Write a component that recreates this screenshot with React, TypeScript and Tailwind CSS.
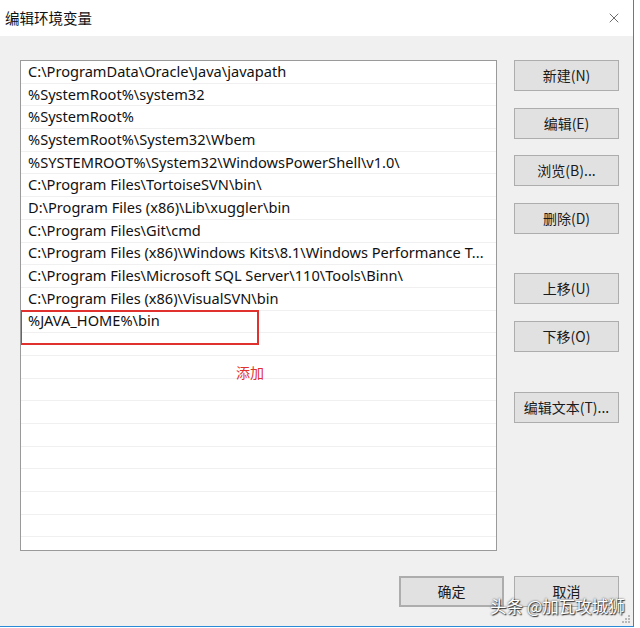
import { X } from "lucide-react";

const paths = [
  "C:\\ProgramData\\Oracle\\Java\\javapath",
  "%SystemRoot%\\system32",
  "%SystemRoot%",
  "%SystemRoot%\\System32\\Wbem",
  "%SYSTEMROOT%\\System32\\WindowsPowerShell\\v1.0\\",
  "C:\\Program Files\\TortoiseSVN\\bin\\",
  "D:\\Program Files (x86)\\Lib\\xuggler\\bin",
  "C:\\Program Files\\Git\\cmd",
  "C:\\Program Files (x86)\\Windows Kits\\8.1\\Windows Performance T...",
  "C:\\Program Files\\Microsoft SQL Server\\110\\Tools\\Binn\\",
  "C:\\Program Files (x86)\\VisualSVN\\bin",
  "%JAVA_HOME%\\bin",
];

const rows = [...paths, ...Array(10).fill("")];

function Btn({ label, className = "" }: { label: string; className?: string }) {
  return (
    <button
      className={
        "h-[31px] w-[105px] bg-[#e1e1e1] border border-[#adadad] text-[14px] text-[#1a1a1a] flex items-center justify-center " +
        className
      }
    >
      {label}
    </button>
  );
}

export default function App() {
  return (
    <div
      className="w-[640px] h-[628px] bg-white flex overflow-hidden"
      style={{ fontFamily: '"Noto Sans", "Noto Sans CJK SC", sans-serif' }}
    >
      <div className="w-[634px] h-[627px] border-r border-b border-[#2b8ad8] flex flex-col bg-[#f0f0f0] relative">
        {/* Title bar */}
        <div className="h-[36px] bg-white flex items-center justify-between pl-[5px] pr-[11px]">
          <span className="text-[14.5px] text-[#111]" style={{ fontFamily: '"Noto Sans CJK SC", sans-serif' }}>
            编辑环境变量
          </span>
          <X className="w-[16px] h-[16px] text-[#222]" strokeWidth={1} />
        </div>

        {/* Body */}
        <div className="flex pl-[20px] pt-[24px]">
          <div className="w-[477px] h-[491px] bg-white border border-[#9a9a9a] overflow-hidden relative">
            {rows.map((r, i) => (
              <div
                key={i}
                className="h-[22.7px] border-b border-[#f0f0f0] pl-[7px] flex items-center text-[14.6px] text-[#111] whitespace-nowrap overflow-hidden"
              >
                {r}
              </div>
            ))}
            {/* annotation */}
            <div className="absolute left-[-1px] top-[249px] w-[239px] h-[35px] border-2 border-[#e0312f]" />
            <div
              className="absolute left-[215px] top-[301px] text-[14px] text-[#e0312f]"
              style={{ fontFamily: '"Noto Sans CJK SC", sans-serif' }}
            >
              添加
            </div>
          </div>

          <div className="flex flex-col ml-[17px]" style={{ fontFamily: '"Noto Sans CJK SC", sans-serif' }}>
            <Btn label="新建(N)" />
            <Btn label="编辑(E)" className="mt-[17px]" />
            <Btn label="浏览(B)..." className="mt-[16px]" />
            <Btn label="删除(D)" className="mt-[17px]" />
            <Btn label="上移(U)" className="mt-[39px]" />
            <Btn label="下移(O)" className="mt-[17px]" />
            <Btn label="编辑文本(T)..." className="mt-[40px]" />
          </div>
        </div>

        {/* Footer buttons */}
        <div
          className="flex justify-end gap-[10px] pr-[14px] mt-[25px]"
          style={{ fontFamily: '"Noto Sans CJK SC", sans-serif' }}
        >
          <Btn label="确定" className="border-2 border-[#0078d7]" />
          <Btn label="取消" />
        </div>

        {/* watermark */}
        <div
          className="absolute left-[490px] top-[594px] text-[16.5px] text-white whitespace-nowrap"
          style={{
            fontFamily: '"Noto Sans CJK SC", sans-serif',
            textShadow: "0 0 2px #333, 1px 1px 1px #333",
          }}
        >
          头条 @加瓦攻城狮
        </div>

        {/* resize grip */}
        <div className="absolute right-[3px] bottom-[3px] grid grid-cols-3 gap-[1px]">
          {[0, 0, 1, 0, 1, 1, 1, 1, 1].map((v, i) => (
            <div key={i} className={"w-[2px] h-[2px] " + (v ? "bg-[#b8b8b8]" : "bg-transparent")} />
          ))}
        </div>
      </div>
    </div>
  );
}
